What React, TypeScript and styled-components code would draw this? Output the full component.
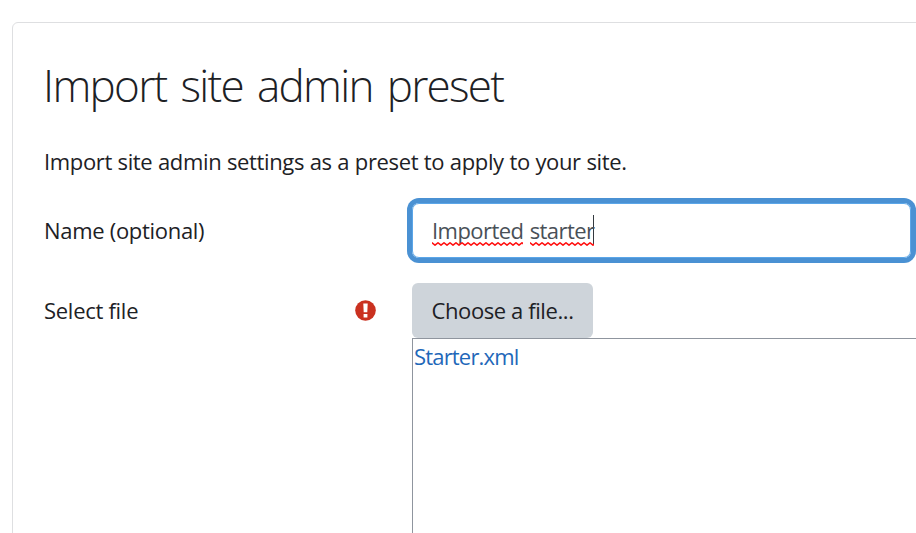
import React from "react";
import styled, { createGlobalStyle } from "styled-components";

const GlobalStyle = createGlobalStyle`
  * { box-sizing: border-box; }
  html, body { margin: 0; background: #fff; overflow: hidden; }
  body {
    font-family: "Open Sans", sans-serif;
    font-size: 22px;
    line-height: 34px;
    color: #1d2125;
  }
`;

const Page = styled.div`
  height: 533px;
  padding: 22px 0 0 12px;
  overflow: hidden;
`;

const Card = styled.main`
  width: 960px;
  height: 560px;
  padding: 35px 31px 0;
  border: 1px solid #dedfe1;
  border-radius: 6px;
  background: #fff;
`;

const Text = styled.span<{ $spacing: number; $words?: number }>`
  display: inline-block;
  padding-bottom: 2px;
  white-space: nowrap;
  letter-spacing: ${(p) => p.$spacing}px;
  word-spacing: ${(p) => p.$words ?? 0}px;
`;

const Heading = styled.h1`
  margin: 0 0 30px -1px;
  height: 56px;
  font-size: 44px;
  line-height: 54px;
  font-weight: 300;
`;

const Intro = styled.p`
  margin: 0 0 25px;
  height: 34px;
`;

const FormRow = styled.div<{ $gap: number }>`
  display: grid;
  grid-template-columns: 368px 1fr;
  margin-bottom: ${(p) => p.$gap}px;
`;

const Label = styled.div`
  display: flex;
  align-items: center;
  justify-content: space-between;
  height: 55px;
  padding-right: 36px;
`;

const NameField = styled.div`
  display: flex;
  align-items: center;
  width: 499px;
  height: 55px;
  padding-left: 19px;
  border: 1px solid #5ba6e8;
  border-radius: 7px;
  box-shadow: 0 0 0 5px #4a91d3;
  color: #495057;
`;

const Word = styled.span`
  display: inline-block;
  position: relative;
`;

const Squiggle = styled.svg`
  position: absolute;
  left: 0;
  bottom: 1px;
  width: 100%;
  height: 4px;
`;

const Caret = styled.i`
  width: 1px;
  height: 30px;
  margin: -2px 0 0 -1px;
  background: #343a40;
`;

const ChooseButton = styled.button`
  display: block;
  width: 181px;
  height: 55px;
  padding: 0 0 0 19.5px;
  border: 0;
  border-radius: 6px;
  background: #ced4da;
  color: #1d2125;
  font: inherit;
  text-align: left;
`;

const FileBox = styled.div`
  height: 240px;
  padding: 0 1px;
  border: 1px solid #8f959e;
`;

const FileLink = styled.a`
  display: block;
  color: #1f68b9;
`;

function Misspelled({ id, children }: { id: string; children: string }) {
  return (
    <Word>
      {children}
      <Squiggle aria-hidden="true">
        <defs>
          <pattern id={id} width="6" height="4" patternUnits="userSpaceOnUse">
            <path d="M-1.5 2 L0 .8 L3 3.2 L6 .8 L7.5 2" fill="none" stroke="#ff1010" strokeWidth="1.5" />
          </pattern>
        </defs>
        <rect width="100%" height="4" fill={`url(#${id})`} />
      </Squiggle>
    </Word>
  );
}

function RequiredIcon() {
  return (
    <svg width="21" height="21" viewBox="0 0 21 21" role="img" aria-label="Required">
      <circle cx="10.5" cy="10.5" r="10.3" fill="#ca3120" />
      <path d="M8.3 3.5h4.4l-.4 8.8H8.7zM8.6 14h3.8v3.5H8.6z" fill="#fff" />
    </svg>
  );
}

export default function App() {
  return (
    <Page>
      <GlobalStyle />
      <Card>
        <Heading><Text $spacing={-1.7} $words={4.2}>Import site admin preset</Text></Heading>
        <Intro><Text $spacing={-0.36} $words={0.3}>Import site admin settings as a preset to apply to your site.</Text></Intro>
        <FormRow $gap={25}>
          <Label><Text $spacing={-0.3}>Name (optional)</Text></Label>
          <NameField>
            <Text $spacing={-0.56} $words={1.1}>
              <Misspelled id="wave-a">Imported</Misspelled> <Misspelled id="wave-b">starter</Misspelled>
            </Text>
            <Caret />
          </NameField>
        </FormRow>
        <FormRow $gap={0}>
          <Label>
            <Text $spacing={-0.28}>Select file</Text>
            <RequiredIcon />
          </Label>
          <div>
            <ChooseButton type="button"><Text $spacing={-0.4}>Choose a file...</Text></ChooseButton>
            <FileBox><FileLink><Text $spacing={-0.82}>Starter.xml</Text></FileLink></FileBox>
          </div>
        </FormRow>
      </Card>
    </Page>
  );
}
